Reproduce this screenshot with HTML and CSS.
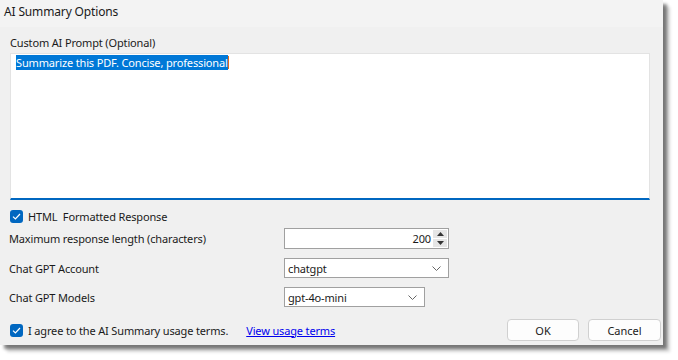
FILE: index.html
```html
<!DOCTYPE html>
<html lang="en">

<head>
    <meta charset="UTF-8">
    <meta name="viewport" content="width=device-width, initial-scale=1.0">
    <title>AI Summary Options</title>
    <link rel="stylesheet" href="styles.css">
</head>

<body>
    <div class="dialog">
        <div class="titlebar">AI Summary Options</div>

        <div class="content">
            <div class="prompt-label">Custom AI Prompt (Optional)</div>
            <div class="prompt">
                <span class="selected">Summarize this PDF. Concise, professional</span><span class="caret"></span>
            </div>

            <label class="check html-check">
                <span class="box">
                    <svg width="9" height="7" viewBox="0 0 9 7"><path d="M1 3.6 L3.4 6 L8 1" fill="none" stroke="#fff" stroke-width="1.2"/></svg>
                </span>
                <span>HTML&nbsp; Formatted Response</span>
            </label>

            <div class="fields">
                <div class="field-label">Maximum response length (characters)</div>
                <div class="spin">
                    <span class="spin-value">200</span>
                    <span class="spin-buttons">
                        <span class="spin-btn">
                            <svg width="7" height="4" viewBox="0 0 7 4"><path d="M0 4 L3.5 0 L7 4 Z" fill="#333"/></svg>
                        </span>
                        <span class="spin-btn">
                            <svg width="7" height="4" viewBox="0 0 7 4"><path d="M0 0 L3.5 4 L7 0 Z" fill="#333"/></svg>
                        </span>
                    </span>
                </div>

                <div class="field-label">Chat GPT Account</div>
                <div class="select account">
                    <span>chatgpt</span>
                    <svg width="9" height="5" viewBox="0 0 9 5"><path d="M0.5 0.5 L4.5 4.5 L8.5 0.5" fill="none" stroke="#666" stroke-width="1"/></svg>
                </div>

                <div class="field-label">Chat GPT Models</div>
                <div class="select models">
                    <span>gpt-4o-mini</span>
                    <svg width="9" height="5" viewBox="0 0 9 5"><path d="M0.5 0.5 L4.5 4.5 L8.5 0.5" fill="none" stroke="#666" stroke-width="1"/></svg>
                </div>
            </div>

            <div class="footer">
                <label class="check">
                    <span class="box">
                        <svg width="9" height="7" viewBox="0 0 9 7"><path d="M1 3.6 L3.4 6 L8 1" fill="none" stroke="#fff" stroke-width="1.2"/></svg>
                    </span>
                    <span>I agree to the AI Summary usage terms.</span>
                </label>
                <a class="terms-link" href="#">View usage terms</a>
                <div class="buttons">
                    <button class="btn ok">OK</button>
                    <button class="btn cancel">Cancel</button>
                </div>
            </div>
        </div>
    </div>
</body>

</html>
```

FILE: styles.css
```css
body {
    margin: 0;
    min-height: 100vh;
    background: #fff;
    font-family: 'Noto Sans', 'Open Sans', sans-serif;
    font-size: 11px;
    letter-spacing: -0.15px;
    color: #1a1a1a;
}

.dialog {
    width: 663px;
    height: 345px;
    overflow: hidden;
    background: #f0f0f0;
    box-shadow: 4px 4px 3px rgba(0, 0, 0, 0.45), 7px 7px 3px rgba(0, 0, 0, 0.15);
    display: flex;
    flex-direction: column;
}

.titlebar {
    height: 27px;
    line-height: 24px;
    padding-left: 4px;
    font-size: 12px;
    background: #f3f3f3;
    color: #1a1a1a;
}

.content {
    padding: 8px 2px 0 10px;
    display: flex;
    flex-direction: column;
}

.prompt-label {
    height: 18px;
    line-height: 16px;
}

.prompt {
    height: 140px;
    margin-right: 11px;
    background: #fff;
    border: 1px solid #e3e3e3;
    border-bottom: 2px solid #0067c0;
    padding: 2px 5px;
    line-height: 13px;
}

.selected {
    background: #0078d7;
    color: #fff;
}

.caret {
    display: inline-block;
    width: 1px;
    height: 13px;
    background: #e06a1b;
    vertical-align: top;
}

.check {
    display: flex;
    align-items: center;
    gap: 5px;
}

.box {
    width: 13px;
    height: 13px;
    border-radius: 3px;
    background: #0067c0;
    display: flex;
    align-items: center;
    justify-content: center;
}

.html-check {
    margin-top: 9px;
    height: 14px;
}

.fields {
    margin-top: 5px;
    display: grid;
    grid-template-columns: 274px auto;
    grid-template-rows: 21px 20px 20px;
    row-gap: 9px;
    align-items: center;
    justify-items: start;
}

.field-label {
    margin-left: -1px;
}

.spin {
    box-sizing: border-box;
    width: 165px;
    height: 21px;
    background: #fff;
    border: 1px solid #a0a0a0;
    display: flex;
    align-items: center;
    justify-content: flex-end;
}

.spin-value {
    padding-right: 2px;
}

.spin-buttons {
    width: 14px;
    height: 17px;
    margin-right: 1px;
    display: flex;
    flex-direction: column;
    gap: 1px;
}

.spin-btn {
    flex: 1;
    background: #e5e5e5;
    display: flex;
    align-items: center;
    justify-content: center;
}

.select {
    box-sizing: border-box;
    height: 20px;
    background: #fff;
    border: 1px solid #a0a0a0;
    display: flex;
    align-items: center;
    justify-content: space-between;
    padding: 0 7px 0 3px;
}

.account {
    width: 165px;
}

.models {
    width: 141px;
}

.footer {
    margin-top: 12px;
    height: 22px;
    display: flex;
    align-items: center;
}

.terms-link {
    margin-left: 18px;
    color: #0000ee;
}

.buttons {
    margin-left: auto;
    display: flex;
    gap: 9px;
}

.btn {
    height: 22px;
    background: #fdfdfd;
    border: 1px solid #d0d0d0;
    border-radius: 4px;
    font-family: inherit;
    font-size: 11px;
    color: #1a1a1a;
    padding: 0;
}

.ok {
    width: 72px;
}

.cancel {
    width: 73px;
}
```
